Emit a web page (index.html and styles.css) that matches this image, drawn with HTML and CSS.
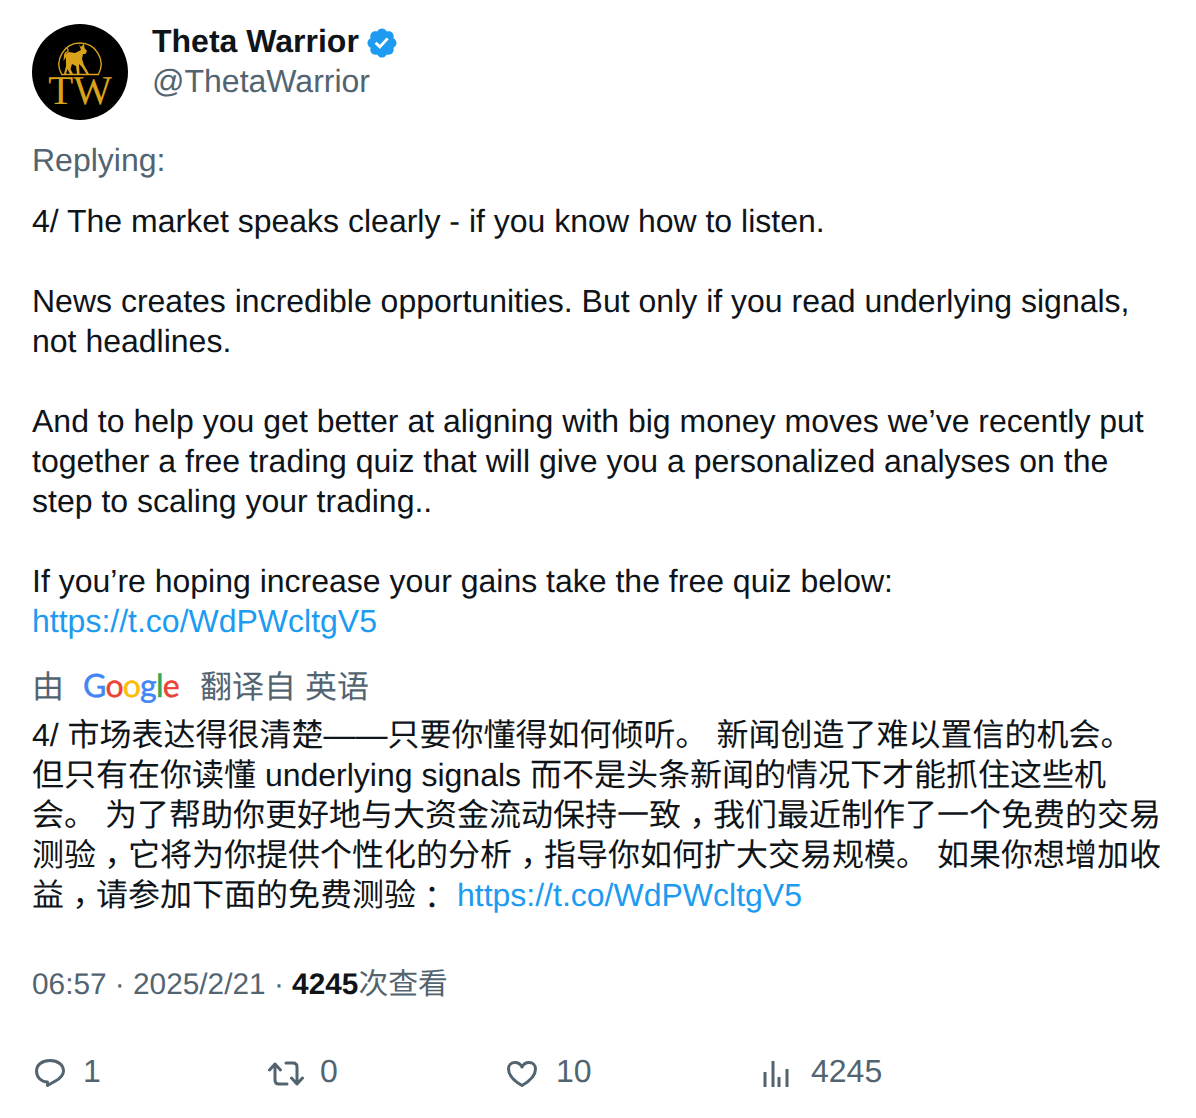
FILE: index.html
```html
<!DOCTYPE html>
<html lang="zh-CN">
<head>
<meta charset="UTF-8">
<title>Theta Warrior</title>
<link rel="stylesheet" href="styles.css">
</head>
<body>

<div class="tweet">
  <div class="author">
    <svg class="avatar" viewBox="0 0 96 96">
      <circle cx="48" cy="48" r="48" fill="#000"/>
      <path class="ring" d="M29.5 50 A21 21 0 1 1 66.5 50"/>
      <path class="baseline" d="M29 50.5 H67"/>
      <path class="bull" d="M47 20 L49 23 L52 19.5 L52.5 24 L55 27 L53.5 30 L51 30 L50 35 L52 41 L57 50 L54.5 50 L50 43 L47 40 L47.5 50 L45 50 L44 42 L40 40 L38.5 45 L41 50 L38 50 L35.5 45 L34 50 L32 50 L34 42 L34 33 L31.5 37 L32 31 L37 28 L43 29 L49 26 Z"/>
      <path class="tail" d="M33 32 C32 28 35 29 36 27 C36.5 25.5 35 24.5 34.5 24"/>
      <text class="avatar-text" x="48" y="80" text-anchor="middle">TW</text>
    </svg>
    <div class="names">
      <div class="name">Theta Warrior
        <svg class="badge" viewBox="0 0 24 24"><path d="M22.25 12c0-1.43-.88-2.67-2.19-3.34.46-1.39.2-2.9-.81-3.91s-2.52-1.27-3.91-.81c-.66-1.31-1.91-2.19-3.34-2.19s-2.67.88-3.33 2.19c-1.4-.46-2.91-.2-3.92.81s-1.26 2.52-.8 3.91c-1.31.67-2.2 1.91-2.2 3.34s.89 2.67 2.2 3.34c-.46 1.39-.21 2.9.8 3.91s2.52 1.26 3.91.81c.67 1.31 1.91 2.19 3.34 2.19s2.68-.88 3.34-2.19c1.39.45 2.9.2 3.91-.81s1.27-2.52.81-3.91c1.31-.67 2.19-1.91 2.19-3.34zm-11.71 4.2L6.8 12.46l1.41-1.42 2.26 2.26 4.8-5.23 1.47 1.36-6.2 6.77z"/></svg>
      </div>
      <div class="handle">@ThetaWarrior</div>
    </div>
  </div>

  <div class="replying">Replying:</div>

  <div class="text" lang="en">4/ The market speaks clearly - if you know how to listen.

News creates incredible opportunities. But only if you read underlying signals, not headlines.

And to help you get better at aligning with big money moves we’ve recently put together a free trading quiz that will give you a personalized analyses on the step to scaling your trading..

If you’re hoping increase your gains take the free quiz below:
<a href="#">https://t.co/WdPWcltgV5</a></div>

  <div class="translated-by">
    <span>由</span>
    <span class="google"><span class="g-blue">G</span><span class="g-red">o</span><span class="g-yellow">o</span><span class="g-blue">g</span><span class="g-green">l</span><span class="g-red">e</span></span>
    <span>翻译自 英语</span>
  </div>

  <div class="text translation">4/ 市场表达得很清楚——只要你懂得如何倾听。 新闻创造了难以置信的机会。 但只有在你读懂 underlying signals 而不是头条新闻的情况下才能抓住这些机会。 为了帮助你更好地与大资金流动保持一致<span class="comma">，</span>我们最近制作了一个免费的交易测验<span class="comma">，</span>它将为你提供个性化的分析<span class="comma">，</span>指导你如何扩大交易规模。 如果你想增加收益<span class="comma">，</span>请参加下面的免费测验<span class="colon">：</span> <a href="#">https://t.co/WdPWcltgV5</a></div>

  <div class="meta">06:57 · 2025/2/21 · <strong>4245</strong>次查看</div>

  <div class="actions">
    <div class="action action-reply">
      <svg class="icon" viewBox="0 0 36 32"><path d="M18 4.5 C26 4.5 31.5 9 31.5 15 C31.5 21 26 23.5 22.5 25.5 L15.5 29.5 L15.5 26 C9 26 4.5 21 4.5 15 C4.5 9 10 4.5 18 4.5 Z"/></svg>
      <span>1</span>
    </div>
    <div class="action action-retweet">
      <svg class="icon" viewBox="0 0 36 32"><path d="M7 8 V24 Q7 28 11 28 H19 M1.5 14 L7 8 L12.5 14 M18 7 H25 Q29 7 29 11 V28 M23.5 22 L29 28 L34.5 22"/></svg>
      <span>0</span>
    </div>
    <div class="action action-like">
      <svg class="icon" viewBox="0 0 36 32"><path d="M17 29.5 C10 25.5 3.5 19.5 3.5 13 C3.5 9 6.2 6.5 10 6.5 C13 6.5 15.5 8 17 11 C18.5 8 21 6.5 24 6.5 C27.8 6.5 30.5 9 30.5 13 C30.5 19.5 24 25.5 17 29.5 Z"/></svg>
      <span>10</span>
    </div>
    <div class="action action-views">
      <svg class="icon" viewBox="0 0 36 32"><rect class="bar" x="4.5" y="16" width="3" height="15"/><rect class="bar" x="12.5" y="5" width="3" height="26"/><rect class="bar" x="18.5" y="21" width="3" height="10"/><rect class="bar" x="26.5" y="13" width="3" height="18"/></svg>
      <span>4245</span>
    </div>
  </div>
</div>

</body>
</html>
```

FILE: styles.css
```css
body {
  margin: 0;
  background: #fff;
  color: #0f1419;
  font-family: "Liberation Sans", "Noto Sans CJK SC", sans-serif;
  font-size: 32px;
  line-height: 40px;
  text-rendering: geometricPrecision;
}
.tweet {
  padding: 21px 32px 0;
}
.author {
  display: flex;
  gap: 24px;
}
.avatar {
  width: 96px;
  height: 96px;
  margin-top: 3px;
  flex-shrink: 0;
}
.ring, .tail {
  fill: none;
  stroke: #d9a21b;
  stroke-width: 1.4;
}
.baseline {
  stroke: #d9a21b;
  stroke-width: 1.4;
}
.bull {
  fill: #d9a21b;
}
.avatar-text {
  fill: #d9a21b;
  font-family: "Liberation Serif", serif;
  font-size: 41px;
}
.name {
  display: flex;
  align-items: center;
  gap: 6px;
  font-weight: 700;
}
.badge {
  width: 34px;
  height: 34px;
  fill: #1d9bf0;
  margin-top: 3px;
}
.handle, .replying, .translated-by, .meta, .action {
  color: #536471;
}
.replying {
  margin-top: 20px;
}
.text {
  margin-top: 21px;
  white-space: pre-wrap;
}
.text a {
  color: #1d9bf0;
  text-decoration: none;
}
/* the reference centres these two marks in their cell, so take the TC forms */
.comma, .colon {
  font-family: "Liberation Sans", "Noto Sans CJK TC", sans-serif;
  font-feature-settings: "locl" 0;
  line-height: 0;
}
.comma {
  vertical-align: -9px;
}
.colon {
  vertical-align: -3px;
}
.translated-by {
  display: flex;
  align-items: center;
  gap: 19px;
  margin-top: 26px;
}
.google {
  width: 98px;
  font-family: Lato, sans-serif;
  font-size: 32px;
  letter-spacing: -0.8px;
  -webkit-text-stroke: 0.5px;
  margin-top: -4px;
}
.g-blue { color: #4285f4; }
.g-red { color: #ea4335; }
.g-yellow { color: #fbbc05; }
.g-green { color: #34a853; }
.translation {
  margin-top: 8px;
}
.meta {
  margin-top: 50px;
  font-size: 29.8px;
}
.meta strong {
  color: #0f1419;
}
.actions {
  display: flex;
  margin-top: 46px;
}
.action {
  display: flex;
  align-items: center;
  gap: 15px;
}
.action-reply { width: 236px; }
.action-retweet { width: 237px; gap: 16px; }
.action-like { width: 254px; }
.action-views { gap: 16px; }
.icon {
  width: 36px;
  height: 32px;
  margin-top: 2px;
  fill: none;
  stroke: #536471;
  stroke-width: 3;
  stroke-linecap: round;
  stroke-linejoin: round;
}
.bar {
  fill: #536471;
  stroke: none;
}
```
